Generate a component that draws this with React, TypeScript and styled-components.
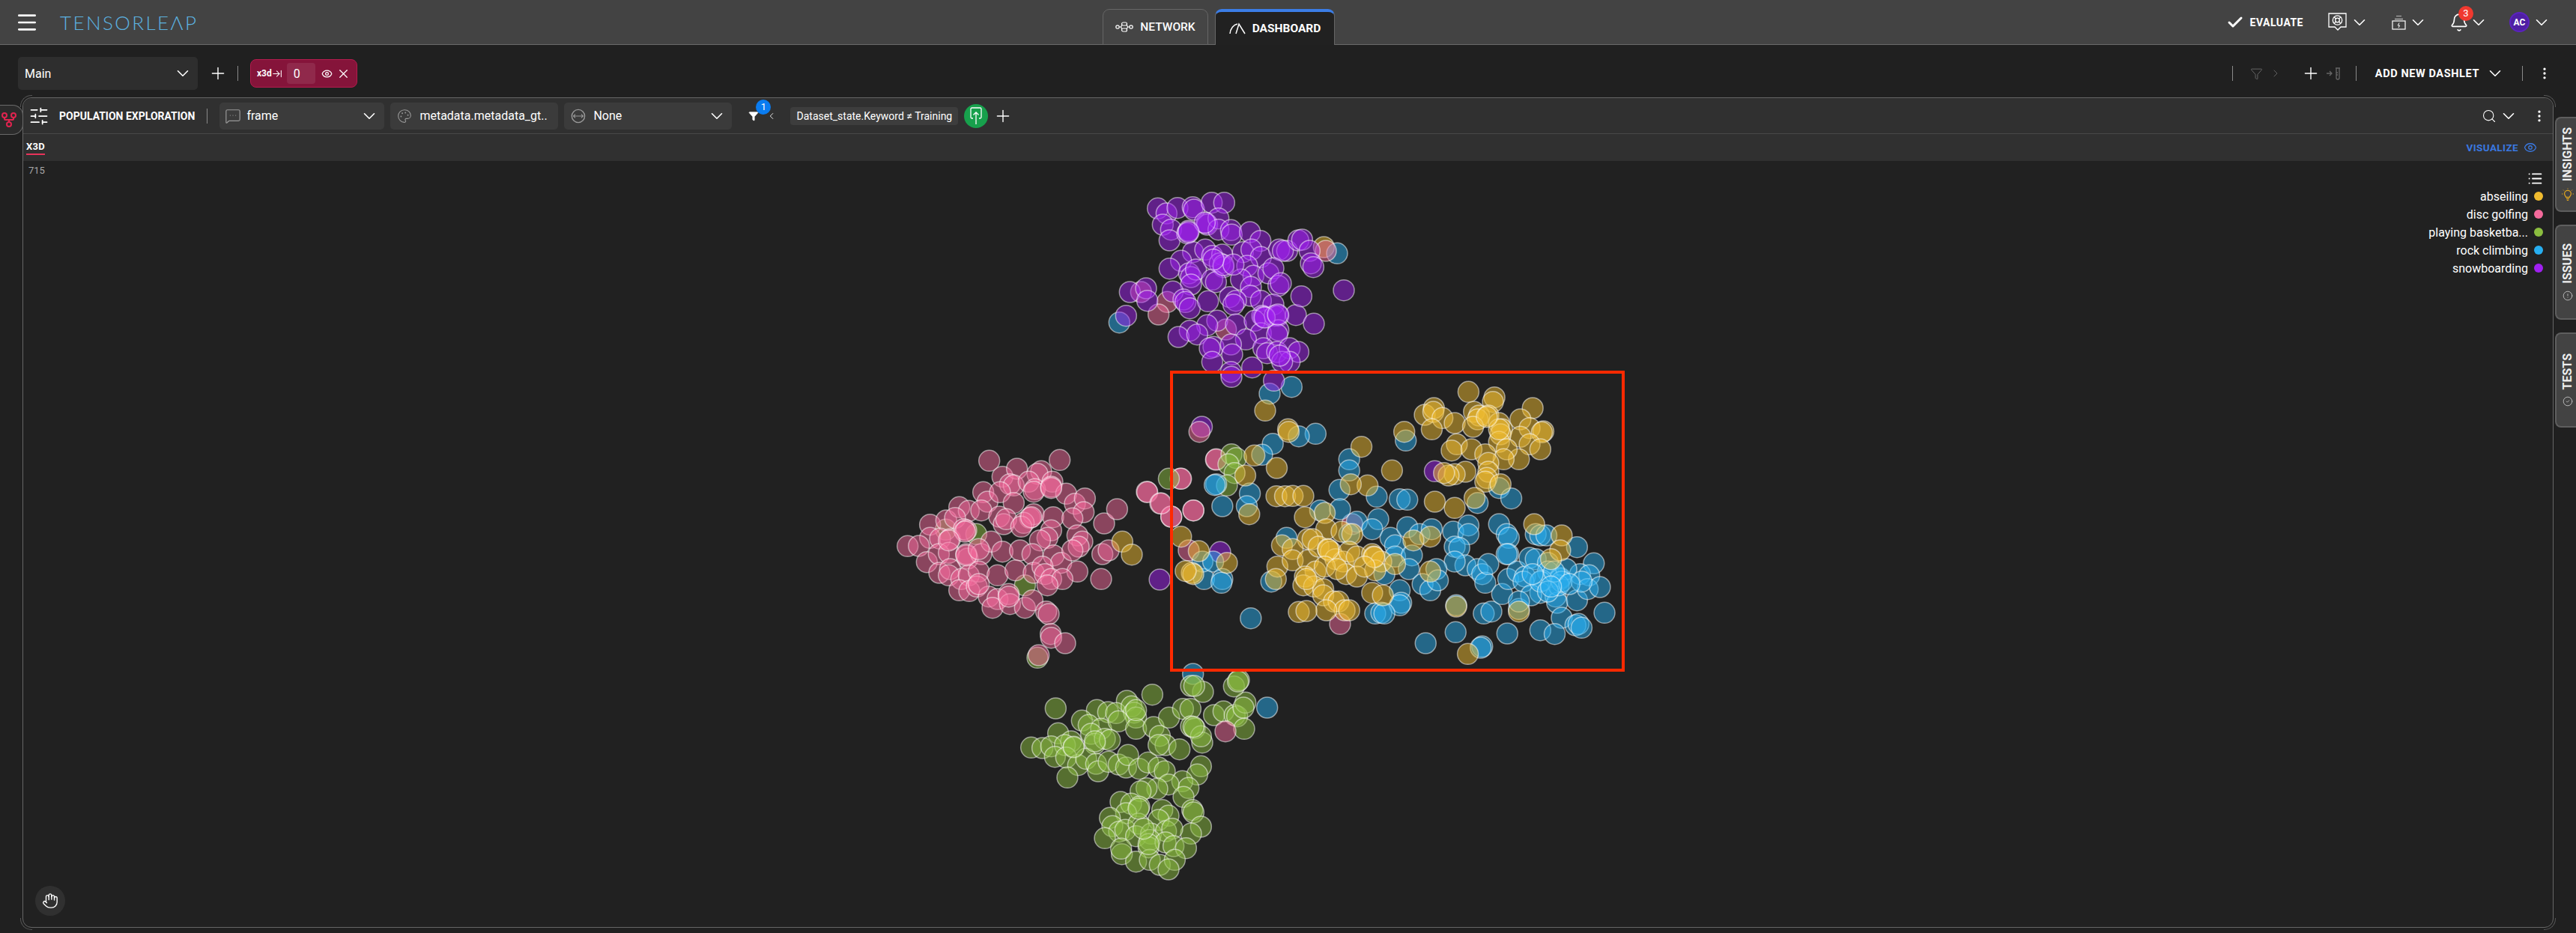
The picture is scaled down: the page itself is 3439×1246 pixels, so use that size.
import React from 'react';
import styled, { createGlobalStyle } from 'styled-components';
import {
  ArrowRightToLine,
  Bell,
  Check,
  ChevronDown,
  ChevronLeft,
  ChevronRight,
  CircleAlert,
  CircleCheck,
  EllipsisVertical,
  Eye,
  Funnel,
  GitFork,
  Hand,
  List,
  Menu,
  MessageSquareMore,
  Palette,
  Plus,
  Search,
  SlidersHorizontal,
  X,
} from 'lucide-react';

const GlobalStyle = createGlobalStyle`
  html, body { margin: 0; padding: 0; background: #202020; }
  body { font-family: Roboto, "Liberation Sans", sans-serif; color: #fff; }
  * { box-sizing: border-box; }
`;

const Page = styled.div`
  width: 3439px;
  height: 1246px;
  display: flex;
  flex-direction: column;
  overflow: hidden;
  background: #202020;
`;

/* top bar */
const TopBar = styled.header`
  height: 60px;
  flex: none;
  display: flex;
  align-items: flex-end;
  background: #434343;
  border-bottom: 1px solid #6a6a6a;
`;

const Brand = styled.div`
  width: 1472px;
  height: 59px;
  padding-left: 20px;
  display: flex;
  align-items: center;
  gap: 28px;
`;

const Logo = styled.span`
  font-family: Lato, Roboto, sans-serif;
  font-weight: 300;
  font-size: 26px;
  letter-spacing: 2.4px;
  color: #5cb2e0;
`;

const Tabs = styled.nav`
  display: flex;
  gap: 9px;
  height: 48px;
  margin-bottom: -1px;
`;

const Tab = styled.div<{ $active?: boolean }>`
  width: ${({ $active }) => ($active ? 160 : 141)}px;
  display: flex;
  align-items: center;
  justify-content: center;
  gap: 9px;
  font-size: 15.5px;
  font-weight: ${({ $active }) => ($active ? 700 : 500)};
  border-radius: 9px 9px 0 0;
  background: ${({ $active }) => ($active ? '#212121' : '#454545')};
  border: 1px solid #666;
  border-top: ${({ $active }) => ($active ? '4px solid #3b7de6' : '1px solid #666')};
  border-bottom: ${({ $active }) => ($active ? 'none' : '1px solid #666')};
`;

const TopActions = styled.div`
  margin-left: auto;
  height: 59px;
  padding-right: 37px;
  display: flex;
  align-items: center;
`;

const Evaluate = styled.div`
  display: flex;
  align-items: center;
  gap: 8px;
  font-size: 14px;
  font-weight: 700;
  letter-spacing: 0.5px;
  margin-right: 33px;
`;

const TopGroup = styled.div<{ $gap?: number }>`
  position: relative;
  display: flex;
  align-items: center;
  gap: 7px;
  margin-right: ${({ $gap }) => $gap ?? 0}px;
`;

const Badge = styled.span<{ $tone: string; $top: number; $left: number }>`
  position: absolute;
  top: ${({ $top }) => $top}px;
  left: ${({ $left }) => $left}px;
  width: 20px;
  height: 20px;
  border-radius: 50%;
  display: flex;
  align-items: center;
  justify-content: center;
  font-size: 13px;
  background: ${({ $tone }) => $tone};
`;

const Avatar = styled.div`
  width: 27px;
  height: 27px;
  border-radius: 50%;
  display: flex;
  align-items: center;
  justify-content: center;
  font-size: 12px;
  font-weight: 700;
  background: #4f1fa3;
  border: 2px solid #5b22c0;
`;

const BellIcon = styled(Bell)`
  margin: -3px;
`;

/* dashboard toolbar */
const Toolbar = styled.div`
  height: 70px;
  flex: none;
  display: flex;
  align-items: center;
  padding: 6px 32px 0 24px;
`;

const Select = styled.div<{ $width: number; $height: number; $space?: number }>`
  width: ${({ $width }) => $width}px;
  height: ${({ $height }) => $height}px;
  margin-left: ${({ $space }) => $space ?? 0}px;
  flex: none;
  display: flex;
  align-items: center;
  gap: 10px;
  padding: 0 11px 0 9px;
  font-size: 16px;
  background: ${({ $height }) => ($height > 40 ? '#2e2e2e' : '#3b3b3b')};
  border-radius: 5px;
`;

const SelectLabel = styled.span`
  flex: 1;
  min-width: 0;
  white-space: nowrap;
`;

const IconSlot = styled.span<{ $space?: number; $tone?: string }>`
  position: relative;
  display: inline-flex;
  align-items: center;
  flex: none;
  margin-left: ${({ $space }) => $space ?? 0}px;
  color: ${({ $tone }) => $tone ?? '#fff'};
`;

const VDivider = styled.span<{ $space: number }>`
  width: 1px;
  height: 20px;
  flex: none;
  margin-left: ${({ $space }) => $space}px;
  background: #8a8a8a;
`;

const SliceChip = styled.div`
  margin-left: 16px;
  width: 143px;
  height: 38px;
  flex: none;
  display: flex;
  align-items: center;
  padding: 0 8px;
  border-radius: 8px;
  background: #85143a;
  border: 1px solid #b41c4e;
  font-size: 12px;
  font-weight: 700;
`;

const SliceValue = styled.span`
  width: 40px;
  height: 28px;
  margin-left: 6px;
  padding-left: 9px;
  display: flex;
  align-items: center;
  border-radius: 4px;
  font-size: 16px;
  font-weight: 400;
  background: rgba(255, 255, 255, 0.09);
`;

const ToolbarRight = styled.div`
  margin-left: auto;
  display: flex;
  align-items: center;
`;

const AddDashlet = styled.span`
  margin-left: 25px;
  font-size: 14.5px;
  font-weight: 700;
  letter-spacing: 0.6px;
`;

/* panel + rails */
const Workspace = styled.div`
  flex: 1;
  min-height: 0;
  display: flex;
  padding-bottom: 7px;
`;

const LeftRail = styled.div`
  width: 30px;
  flex: none;
  padding-top: 10px;
`;

const ForkTab = styled.div`
  width: 31px;
  height: 40px;
  padding-right: 6px;
  display: flex;
  align-items: center;
  justify-content: center;
  color: #e0244f;
  background: #2b2b2b;
  border: 1px solid #6a6a6a;
  border-left: none;
  border-radius: 0 14px 14px 0;
  position: relative;
  z-index: 1;
`;

const Panel = styled.section`
  position: relative;
  flex: 1;
  min-width: 0;
  display: flex;
  flex-direction: column;
  border: 1px solid #666;
  border-radius: 12px;
  background: #212121;
`;

const CornerArc = styled.span<{ $v: 'top' | 'bottom'; $h: 'left' | 'right' }>`
  position: absolute;
  width: 16px;
  height: 16px;
  ${({ $v }) => $v}: -4px;
  ${({ $h }) => $h}: -4px;
  border-${({ $v }) => $v}: 1px solid #555;
  border-${({ $h }) => $h}: 1px solid #555;
  border-${({ $v }) => $v}-${({ $h }) => $h}-radius: 15px;
`;

const PanelHead = styled.div`
  height: 48px;
  flex: none;
  display: flex;
  align-items: center;
  padding: 0 8px 0 10px;
  background: #303030;
  border-bottom: 1px solid #484848;
  border-radius: 12px 12px 0 0;
`;

const SlidersIcon = styled(SlidersHorizontal)`
  margin: -3.5px;
`;

const FrameIcon = styled(MessageSquareMore)`
  margin: 0 -3px 0 -2px;
`;

const WidePlus = styled(Plus)`
  margin: -3px;
`;

const PanelTitle = styled.span`
  margin-left: 17px;
  font-size: 14px;
  font-weight: 700;
  white-space: nowrap;
`;

const FilterTag = styled.span`
  margin-left: 18px;
  width: 224px;
  height: 24px;
  display: flex;
  align-items: center;
  justify-content: center;
  font-size: 14px;
  white-space: nowrap;
  border-radius: 4px;
  background: #3d3d3d;
`;

const GreenButton = styled.span`
  width: 32px;
  height: 32px;
  margin-left: 8px;
  flex: none;
  display: flex;
  align-items: center;
  justify-content: center;
  border-radius: 50%;
  background: #17a04c;
`;

const HeadRight = styled.div`
  margin-left: auto;
  display: flex;
  align-items: center;
`;

const SubHead = styled.div`
  height: 36px;
  flex: none;
  display: flex;
  align-items: center;
  justify-content: space-between;
  padding: 0 21px 0 4px;
  background: #303030;
`;

const VizTab = styled.span`
  font-size: 13px;
  font-weight: 700;
  letter-spacing: 0.3px;
  padding-bottom: 2px;
  border-bottom: 2px solid #e8335a;
`;

const Visualize = styled.span`
  display: flex;
  align-items: center;
  gap: 7px;
  font-size: 13.5px;
  font-weight: 700;
  letter-spacing: 0.4px;
  color: #3a78e0;
`;

const ChartBody = styled.div`
  position: relative;
  flex: 1;
  min-height: 0;
`;

const ChartSvg = styled.svg`
  display: block;
  width: 100%;
  height: 100%;
`;

const SampleCount = styled.span`
  position: absolute;
  top: 5px;
  left: 7px;
  font-size: 13px;
  color: #a8a8a8;
`;

const Legend = styled.div`
  position: absolute;
  top: 13px;
  right: 13px;
  display: flex;
  flex-direction: column;
  align-items: flex-end;
`;

const LegendIcon = styled(List)`
  margin-bottom: 1px;
`;

const LegendRow = styled.div`
  height: 24px;
  display: flex;
  align-items: center;
  gap: 8px;
  font-size: 16px;
`;

const LegendDot = styled.span<{ $color: string }>`
  width: 12px;
  height: 12px;
  border-radius: 50%;
  background: ${({ $color }) => $color};
`;

const HandButton = styled.div`
  position: absolute;
  left: 16px;
  bottom: 15px;
  width: 40px;
  height: 40px;
  display: flex;
  align-items: center;
  justify-content: center;
  border-radius: 50%;
  background: #303030;
`;

const RightRail = styled.aside`
  width: 28px;
  margin-left: 2px;
  flex: none;
  display: flex;
  flex-direction: column;
  gap: 17px;
  padding-top: 26px;
`;

const RailTab = styled.div`
  height: 127px;
  display: flex;
  flex-direction: column;
  align-items: center;
  justify-content: center;
  gap: 9px;
  padding-left: 4px;
  background: #434343;
  border: 2px solid #5e5e5e;
  border-right: none;
  border-radius: 8px 0 0 8px;
`;

const RailLabel = styled.span`
  writing-mode: vertical-rl;
  transform: rotate(180deg);
  font-size: 16px;
  line-height: 16px;
  font-weight: 700;
  color: #eee;
`;

/* hand drawn icons */
const NetworkIcon = () => (
  <svg width="24" height="14" viewBox="0 0 24 14" fill="none" stroke="#fff" strokeWidth="1.2">
    <circle cx="3" cy="7" r="2.2" />
    <circle cx="21" cy="7" r="2.2" />
    <rect x="8.5" y="1" width="7" height="4" rx="2" />
    <rect x="8.5" y="9" width="7" height="4" rx="2" />
    <path d="M5 7h2.5l1.5-3M5 7h2.5l1.5 3M19 7h-2.5l-1.5-3M19 7h-2.5l-1.5 3" />
  </svg>
);

const GaugeIcon = () => (
  <svg width="22" height="16" viewBox="0 0 22 16" fill="none" stroke="#fff" strokeWidth="1.5">
    <path d="M1 15C1.5 8 6 3 11 2" />
    <path d="M9 15 13 2 21 15" />
  </svg>
);

const SupportIcon = () => (
  <svg width="26" height="25" viewBox="0 0 26 25" fill="none" stroke="#fff" strokeWidth="1.3">
    <path d="M1 1h23v18h-7l-4 4-4-4H1z" />
    <circle cx="12.5" cy="10" r="6.2" />
    <circle cx="12.5" cy="10" r="2.8" />
    <path d="M8.2 5.7l2.4 2.4M16.8 5.7l-2.4 2.4M8.2 14.3l2.4-2.4M16.8 14.3l-2.4-2.4" />
  </svg>
);

const JobsIcon = () => (
  <svg width="19" height="20" viewBox="0 0 19 20" fill="none" stroke="#fff" strokeWidth="1.2">
    <rect x="1" y="8" width="17" height="11" />
    <path d="M4 5.5h11" stroke="#aaa" strokeWidth="1.6" />
    <path d="M6 1.5h7" stroke="#aaa" strokeWidth="1.2" />
    <path d="M10 10.5 8.2 14h2.4L9 17" strokeWidth="1" />
  </svg>
);

const NoneIcon = () => (
  <svg width="20" height="20" viewBox="0 0 20 20" fill="none" stroke="#999" strokeWidth="1.4">
    <circle cx="10" cy="10" r="8.6" />
    <path d="M3.5 10h13M6 7.6 3.5 10 6 12.4M14 7.6l2.5 2.4-2.5 2.4" strokeWidth="1.1" />
  </svg>
);

const UploadIcon = () => (
  <svg width="16" height="24" viewBox="0 0 16 24" fill="none" stroke="#fff" strokeWidth="1.3">
    <path d="M4 15H2.5A1.5 1.5 0 0 1 1 13.5v-11A1.5 1.5 0 0 1 2.5 1h11A1.5 1.5 0 0 1 15 2.5v11a1.5 1.5 0 0 1-1.5 1.5H12" />
    <path d="M8 23V7M4.5 10.5 8 7l3.5 3.5" />
  </svg>
);

const TestTubeIcon = () => (
  <svg width="20" height="18" viewBox="0 0 20 18" fill="none" stroke="#666" strokeWidth="1.3">
    <path d="M1 9h7M5 6l3 3-3 3" />
    <path d="M13 2h6M14 2v13a2 2 0 0 0 4 0V2M14 8h2M14 11h2" />
  </svg>
);

const BulbIcon = () => (
  <svg width="18" height="18" viewBox="0 0 18 18" fill="none" stroke="#e0a51f" strokeWidth="1.2">
    <path d="M6.6 12.4c0-1.2-2-2.2-2-4.6a4.4 4.4 0 0 1 8.8 0c0 2.4-2 3.4-2 4.6z" />
    <path d="M7 14.4h4M7.8 16.4h2.4" />
    <path d="M1 8h1.4M15.6 8H17M3 2.6l1 1M15 2.6l-1 1M9 .5v1" strokeWidth="1" />
  </svg>
);

/* scatter data, grouped the way the clusters read on screen */
const COLORS = {
  gold: '#f0bb2f',
  pink: '#f46a9b',
  green: '#8bbd3f',
  blue: '#27aef0',
  purple: '#a020f0',
};

type Series = keyof typeof COLORS;
type Region = { x: number; y: number; sx: number; sy: number; points: Partial<Record<Series, number[]>> };

const TOP: Region = {
  x: 1400, y: 220, sx: 3, sy: 3,
  points: {
    gold: [1102, 330],
    blue: [1155, 355, 283, 632, 973, 890, 885, 917],
    pink: [370, 510, 475, 550, 440, 600, 710, 660, 1110, 345],
    purple: [437, 175, 472, 195, 516, 173, 577, 170, 582, 180, 653, 152, 703, 152, 457, 240, 490, 260, 484, 303, 555, 275, 560, 265, 632, 235, 635, 240, 680, 215, 680, 260, 730, 262, 733, 280, 806, 270, 848, 305, 578, 350, 627, 340, 655, 365, 695, 360, 685, 395, 700, 410, 778, 350, 812, 340, 850, 370, 923, 340, 955, 345, 938, 345, 1000, 303, 1015, 300, 1045, 345, 1050, 395, 1060, 410, 530, 385, 484, 416, 562, 435, 570, 450, 590, 420, 655, 460, 670, 470, 795, 405, 820, 445, 880, 435, 900, 415, 920, 485, 930, 475, 770, 460, 810, 490, 808, 525, 570, 480, 497, 508, 540, 540, 548, 550, 565, 575, 638, 547, 725, 530, 750, 545, 740, 560, 850, 545, 900, 560, 855, 605, 860, 610, 905, 605, 920, 605, 990, 602, 1012, 527, 1062, 637, 1182, 503, 325, 510, 390, 495, 395, 545, 310, 605, 675, 625, 635, 643, 565, 665, 520, 690, 595, 680, 750, 640, 825, 625, 850, 675, 920, 663, 915, 680, 790, 700, 660, 730, 645, 735, 730, 720, 735, 760, 655, 790, 730, 830, 732, 850, 815, 812, 860, 735, 875, 755, 915, 750, 965, 735, 1000, 750, 965, 790, 935, 790, 902, 865, 700, 402, 625, 232, 865, 612, 918, 600, 925, 765, 740, 400, 560, 270, 660, 380],
  },
};

const LEFT: Region = {
  x: 1150, y: 560, sx: 3, sy: 3,
  points: {
    green: [338, 442, 460, 460, 655, 665, 705, 955],
    pink: [512, 166, 794, 163, 565, 230, 623, 198, 720, 208, 705, 218, 765, 250, 595, 260, 610, 265, 670, 250, 695, 280, 690, 290, 760, 270, 820, 298, 855, 338, 895, 317, 890, 372, 488, 292, 505, 330, 555, 292, 610, 335, 275, 422, 340, 405, 392, 352, 430, 367, 480, 365, 375, 395, 552, 390, 570, 420, 580, 400, 675, 395, 690, 380, 650, 415, 640, 430, 768, 392, 845, 397, 760, 445, 745, 475, 715, 485, 865, 465, 885, 490, 870, 510, 275, 475, 315, 478, 355, 480, 410, 440, 420, 445, 185, 508, 230, 507, 262, 572, 310, 540, 350, 535, 425, 558, 420, 540, 480, 540, 520, 490, 565, 530, 635, 525, 685, 540, 770, 545, 800, 575, 845, 525, 865, 610, 312, 615, 355, 600, 350, 625, 400, 640, 430, 625, 470, 610, 545, 625, 617, 605, 690, 615, 725, 590, 735, 620, 760, 640, 805, 640, 745, 665, 392, 685, 432, 688, 462, 670, 510, 710, 545, 720, 590, 700, 525, 755, 595, 740, 655, 755, 685, 725, 740, 770, 750, 780, 758, 860, 760, 875, 816, 897, 710, 945, 972, 417, 1024, 360, 960, 640, 965, 540, 990, 525, 1143, 290, 1145, 292, 1197, 337, 1241, 390, 1278, 238, 1330, 365, 1420, 162, 420, 545, 680, 392, 415, 450, 760, 275, 470, 660, 350, 485, 470, 520, 590, 710],
    gold: [1045, 490, 1083, 542],
  },
};

const BOTTOM: Region = {
  x: 1340, y: 880, sx: 3, sy: 3,
  points: {
    blue: [758, 60, 1055, 195],
    green: [208, 198, 493, 168, 595, 143, 373, 205, 418, 213, 450, 217, 512, 190, 522, 215, 530, 235, 313, 247, 340, 265, 390, 280, 460, 250, 530, 280, 218, 298, 110, 355, 155, 357, 190, 350, 270, 330, 245, 345, 280, 355, 350, 300, 365, 340, 405, 320, 425, 325, 205, 392, 250, 395, 298, 425, 330, 400, 370, 420, 378, 450, 255, 475, 420, 412, 460, 423, 490, 435, 498, 385, 543, 440, 578, 415, 620, 435, 645, 450, 600, 273, 625, 308, 648, 345, 620, 345, 704, 362, 662, 235, 718, 200, 748, 200, 750, 270, 765, 278, 795, 335, 790, 310, 790, 430, 775, 463, 715, 490, 740, 517, 660, 503, 615, 520, 572, 518, 548, 530, 720, 553, 468, 573, 510, 580, 543, 592, 490, 618, 425, 637, 635, 605, 660, 628, 755, 605, 760, 615, 790, 672, 750, 700, 620, 645, 435, 670, 462, 692, 487, 685, 405, 718, 540, 660, 530, 710, 590, 700, 650, 690, 675, 680, 585, 725, 580, 755, 648, 735, 680, 750, 730, 758, 473, 782, 530, 812, 585, 805, 625, 825, 685, 805, 660, 843, 470, 760, 842, 225, 880, 210, 925, 225, 935, 230, 968, 175, 960, 195, 963, 280, 922, 110, 942, 85, 938, 90, 798, 132, 750, 108, 763, 108, 580, 742, 365, 330, 540, 600, 760, 272, 280, 352, 530, 205, 560, 680],
    pink: [888, 290],
  },
};

const BOX: Region = {
  x: 1540, y: 480, sx: 2.45, sy: 3,
  points: {
    purple: [158, 270, 218, 772, 20, 882, 920, 448],
    pink: [205, 400, 90, 478, 150, 290, 130, 605, 58, 630, 25, 577, 115, 765, 610, 1060, 650, 660],
    green: [255, 380, 270, 395, 245, 420, 265, 455, 240, 505, 50, 478],
    blue: [825, 325, 1130, 515, 1170, 557, 1060, 575, 640, 400, 640, 445, 608, 523, 730, 550, 805, 560, 830, 562, 530, 298, 475, 308, 390, 338, 355, 382, 315, 537, 225, 588, 305, 588, 205, 500, 200, 503, 165, 880, 160, 810, 195, 810, 225, 880, 222, 895, 545, 605, 610, 600, 665, 650, 735, 640, 715, 680, 640, 700, 775, 715, 790, 745, 790, 790, 845, 785, 835, 840, 755, 860, 435, 715, 830, 672, 870, 700, 910, 680, 980, 690, 1030, 665, 1030, 700, 985, 750, 1000, 755, 1020, 825, 985, 810, 1060, 840, 1075, 860, 1085, 895, 1095, 820, 1130, 660, 1155, 700, 1162, 715, 1160, 780, 1155, 780, 1250, 700, 1265, 705, 1285, 705, 1385, 752, 1440, 817, 925, 840, 880, 900, 905, 925, 930, 885, 805, 925, 810, 975, 805, 985, 725, 1018, 745, 1015, 755, 1018, 385, 890, 318, 1037, 890, 1137, 988, 1093, 1075, 1150, 1070, 1155, 1080, 1018, 1105, 1010, 1195, 1000, 1140, 940, 1160, 880, 1190, 850, 1215, 870, 1230, 795, 1250, 800, 1290, 815, 1290, 850, 1330, 875, 1330, 880, 1270, 885, 1210, 890, 1265, 935, 1235, 945, 1315, 950, 1320, 975, 1385, 965, 1395, 860, 1425, 865, 1420, 920, 1460, 912, 1335, 1035, 1380, 1065, 1390, 1060, 1400, 1075, 1475, 1015, 1265, 1085, 1312, 1100, 1157, 1098, 1350, 840, 1325, 905, 990, 985, 1195, 970, 1335, 890, 1265, 890, 1310, 850, 1400, 890, 1290, 930, 1360, 900, 1240, 860, 1300, 910],
    gold: [1030, 130, 1115, 152, 1110, 170, 1240, 195, 887, 222, 917, 195, 915, 210, 945, 235, 985, 255, 1048, 210, 1065, 225, 1060, 240, 1095, 225, 1045, 270, 1130, 255, 1140, 280, 1200, 240, 1230, 275, 1275, 288, 1270, 292, 1200, 310, 1230, 340, 1265, 360, 1195, 400, 1135, 300, 1130, 330, 1155, 360, 1145, 400, 910, 280, 992, 340, 975, 365, 1040, 360, 1085, 380, 1095, 415, 1095, 450, 1090, 475, 1085, 490, 1135, 500, 1020, 450, 985, 460, 965, 465, 950, 455, 820, 290, 1050, 555, 920, 570, 985, 595, 780, 445, 680, 350, 700, 505, 645, 500, 365, 205, 440, 280, 442, 290, 330, 385, 403, 435, 300, 465, 402, 548, 430, 548, 455, 547, 490, 547, 313, 620, 90, 710, 148, 768, 125, 855, 130, 860, 105, 848, 240, 815, 495, 632, 560, 615, 565, 680, 615, 690, 650, 700, 420, 745, 505, 720, 520, 720, 455, 760, 405, 830, 455, 805, 505, 805, 540, 750, 570, 760, 580, 770, 595, 800, 620, 810, 640, 770, 665, 790, 530, 850, 495, 870, 490, 905, 525, 910, 555, 920, 555, 945, 590, 970, 605, 970, 625, 1005, 640, 1005, 565, 1005, 475, 1012, 500, 1008, 630, 860, 665, 870, 715, 780, 720, 790, 745, 810, 725, 845, 790, 820, 400, 880, 715, 935, 750, 945, 905, 710, 850, 725, 905, 850, 990, 990, 1195, 1010, 1245, 660, 1335, 705, 1330, 765, 1300, 800, 1028, 1180, 1130, 280, 1090, 230, 722, 792, 572, 762, 500, 880, 560, 830, 600, 840, 690, 830],
  },
};

const REGIONS = [TOP, LEFT, BOTTOM, BOX];
const LEGEND: [string, Series][] = [
  ['abseiling', 'gold'],
  ['disc golfing', 'pink'],
  ['playing basketba...', 'green'],
  ['rock climbing', 'blue'],
  ['snowboarding', 'purple'],
];

const dots = REGIONS.flatMap((region) =>
  (Object.keys(region.points) as Series[]).flatMap((series) => {
    const raw = region.points[series] ?? [];
    const out: { cx: number; cy: number; fill: string }[] = [];
    for (let i = 0; i < raw.length; i += 2) {
      out.push({
        cx: region.x + raw[i] / region.sx,
        cy: region.y + raw[i + 1] / region.sy,
        fill: COLORS[series],
      });
    }
    return out;
  }),
);

const ChevronGlyph = styled(ChevronDown)`
  margin: -4px;
`;

const Chevron = () => <ChevronGlyph size={26} strokeWidth={1.5} />;

const App = () => {
  return (
    <Page>
      <GlobalStyle />
      <TopBar>
        <Brand>
          <Menu size={32} strokeWidth={2} />
          <Logo>TENSORLEΛP</Logo>
        </Brand>
        <Tabs>
          <Tab>
            <NetworkIcon />
            NETWORK
          </Tab>
          <Tab $active>
            <GaugeIcon />
            DASHBOARD
          </Tab>
        </Tabs>
        <TopActions>
          <Evaluate>
            <Check size={24} strokeWidth={3} />
            EVALUATE
          </Evaluate>
          <TopGroup $gap={34}>
            <SupportIcon />
            <Chevron />
          </TopGroup>
          <TopGroup $gap={36}>
            <JobsIcon />
            <Chevron />
          </TopGroup>
          <TopGroup $gap={32}>
            <BellIcon size={26} strokeWidth={1.5} />
            <Badge $tone="#f0392f" $top={-12} $left={9}>3</Badge>
            <Chevron />
          </TopGroup>
          <TopGroup>
            <Avatar>AC</Avatar>
            <Chevron />
          </TopGroup>
        </TopActions>
      </TopBar>

      <Toolbar>
        <Select $width={240} $height={44}>
          <SelectLabel>Main</SelectLabel>
          <Chevron />
        </Select>
        <IconSlot $space={17}>
          <WidePlus size={26} strokeWidth={1.3} />
        </IconSlot>
        <VDivider $space={16} />
        <SliceChip>
          x3d
          <ArrowRightToLine size={15} strokeWidth={1.8} />
          <SliceValue>0</SliceValue>
          <IconSlot $space={8}><Eye size={15} strokeWidth={2} /></IconSlot>
          <IconSlot $space={5}><X size={19} strokeWidth={1.5} /></IconSlot>
        </SliceChip>
        <ToolbarRight>
          <VDivider $space={0} />
          <IconSlot $space={23} $tone="#666"><Funnel size={17} strokeWidth={1.4} /></IconSlot>
          <IconSlot $space={9} $tone="#666"><ChevronRight size={16} strokeWidth={1.4} /></IconSlot>
          <IconSlot $space={29}><WidePlus size={26} strokeWidth={1.3} /></IconSlot>
          <IconSlot $space={10}><TestTubeIcon /></IconSlot>
          <VDivider $space={20} />
          <AddDashlet>ADD NEW DASHLET</AddDashlet>
          <IconSlot $space={12}><Chevron /></IconSlot>
          <VDivider $space={27} />
          <IconSlot $space={19}><EllipsisVertical size={20} strokeWidth={2} /></IconSlot>
        </ToolbarRight>
      </Toolbar>

      <Workspace>
        <LeftRail>
          <ForkTab>
            <GitFork size={24} strokeWidth={2} />
          </ForkTab>
        </LeftRail>
        <Panel>
          <CornerArc $v="top" $h="left" />
          <CornerArc $v="top" $h="right" />
          <CornerArc $v="bottom" $h="left" />
          <CornerArc $v="bottom" $h="right" />
          <PanelHead>
            <SlidersIcon size={28} strokeWidth={1.5} />
            <PanelTitle>POPULATION EXPLORATION</PanelTitle>
            <VDivider $space={16} />
            <Select $width={220} $height={36} $space={16}>
              <IconSlot $tone="#999"><FrameIcon size={22} strokeWidth={1.3} /></IconSlot>
              <SelectLabel>frame</SelectLabel>
              <Chevron />
            </Select>
            <Select $width={224} $height={36} $space={8}>
              <IconSlot $tone="#999"><Palette size={20} strokeWidth={1.3} /></IconSlot>
              <SelectLabel>metadata.metadata_gt..</SelectLabel>
            </Select>
            <Select $width={224} $height={36} $space={8}>
              <NoneIcon />
              <SelectLabel>None</SelectLabel>
              <Chevron />
            </Select>
            <IconSlot $space={22}>
              <Funnel size={14} fill="#fff" strokeWidth={1.2} />
              <Badge $tone="#0a7cf0" $top={-15} $left={10}>1</Badge>
            </IconSlot>
            <IconSlot $space={10}><ChevronLeft size={14} strokeWidth={1.5} /></IconSlot>
            <FilterTag>Dataset_state.Keyword ≠ Training</FilterTag>
            <GreenButton><UploadIcon /></GreenButton>
            <IconSlot $space={10}><WidePlus size={26} strokeWidth={1.3} /></IconSlot>
            <HeadRight>
              <Search size={20} strokeWidth={1.3} />
              <IconSlot $space={7}><Chevron /></IconSlot>
              <IconSlot $space={22}><EllipsisVertical size={20} strokeWidth={2} /></IconSlot>
            </HeadRight>
          </PanelHead>
          <SubHead>
            <VizTab>X3D</VizTab>
            <Visualize>
              VISUALIZE
              <Eye size={18} strokeWidth={1.7} />
            </Visualize>
          </SubHead>
          <ChartBody>
            <ChartSvg viewBox="31 215 3377 1023" preserveAspectRatio="none">
              {dots.map((d, i) => (
                <circle
                  key={i}
                  cx={d.cx}
                  cy={d.cy}
                  r={14}
                  fill={d.fill}
                  fillOpacity={0.5}
                  stroke="#fff"
                  strokeOpacity={0.5}
                  strokeWidth={1.5}
                />
              ))}
              <rect x={1564} y={497} width={603} height={398} fill="none" stroke="#ff2a00" strokeWidth={4} />
            </ChartSvg>
            <SampleCount>715</SampleCount>
            <Legend>
              <LegendIcon size={21} strokeWidth={2.2} />
              {LEGEND.map(([label, series]) => (
                <LegendRow key={label}>
                  {label}
                  <LegendDot $color={COLORS[series]} />
                </LegendRow>
              ))}
            </Legend>
            <HandButton>
              <Hand size={22} strokeWidth={1.5} />
            </HandButton>
          </ChartBody>
        </Panel>
        <RightRail>
          <RailTab>
            <RailLabel>INSIGHTS</RailLabel>
            <BulbIcon />
          </RailTab>
          <RailTab>
            <RailLabel>ISSUES</RailLabel>
            <CircleAlert size={14} strokeWidth={1.4} color="#ccc" />
          </RailTab>
          <RailTab>
            <RailLabel>TESTS</RailLabel>
            <CircleCheck size={14} strokeWidth={1.4} color="#ccc" />
          </RailTab>
        </RightRail>
      </Workspace>
    </Page>
  );
};

export default App;
